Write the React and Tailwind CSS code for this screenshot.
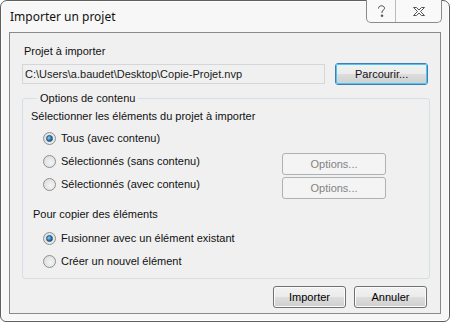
import React from 'react';

const btn =
  'flex items-center justify-center rounded-[3px] border border-[#707070] bg-[linear-gradient(180deg,#f2f2f2_0%,#ebebeb_50%,#dddddd_51%,#cfcfcf_100%)] text-[11px] text-black shadow-[inset_0_0_0_1px_#fcfcfc]';

function Radio({ checked, label }) {
  return (
    <div className="flex h-[23px] items-center gap-[5px]">
      <span className="flex h-[13px] w-[13px] items-center justify-center rounded-full border border-[#8e8f8f] bg-[radial-gradient(circle_at_60%_60%,#f4f4f4_0%,#d8d8d8_100%)]">
        {checked && (
          <span className="h-[7px] w-[7px] rounded-full border border-[#1b4c7a] bg-[radial-gradient(circle_at_35%_35%,#8ad0f2_0%,#2a7ab8_55%,#14406a_100%)]" />
        )}
      </span>
      <span>{label}</span>
    </div>
  );
}

export default function App() {
  return (
    <div className="h-[324px] w-[451px] bg-white font-['Liberation_Sans',Arial,sans-serif] text-[11px] text-[#111]">
      <div className="relative h-[322px] w-[450px] rounded-t-[7px] rounded-b-[6px] border border-[#5e5e5e] bg-[#f7f7f7] shadow-[inset_0_0_0_1px_#ffffff]">
        {/* barre de titre */}
        <div className="flex h-[31px] items-center pl-[9px] font-['Noto_Sans',sans-serif] text-[12px] text-[#111]">
          Importer un projet
        </div>
        <div className="absolute right-[7px] top-[-1px] flex h-[23px] w-[76px] rounded-b-[5px] border border-t-0 border-[#8a8a8a] bg-[#f9f9f9]">
          <div className="flex w-[29px] items-center justify-center border-r border-[#bcbcbc] text-[12px] text-[#444]">
            <svg width="9" height="12" viewBox="0 0 9 12" fill="none" stroke="#444" strokeWidth="1">
              <path d="M1.5 3.5C1.5 1.5 3 0.8 4.5 0.8S7.5 1.6 7.5 3.3C7.5 5 5 5.2 5 7.2V8M4.3 10h1.4v1.4H4.3z" />
            </svg>
          </div>
          <div className="flex flex-1 items-center justify-center">
            <svg width="14" height="11" viewBox="0 0 14 11" fill="none" stroke="#555" strokeWidth="1">
              <path d="M1.5 1.5h3l2.5 2.5 2.5-2.5h3l-4 4 4 4h-3L7 7 4.5 9.5h-3l4-4z" />
            </svg>
          </div>
        </div>

        {/* zone client */}
        <div className="mx-[8px] h-[282px] border border-[#878b8f] bg-[#f0f0f0] px-[12px] pt-[12px]">
          <div className="pl-[2px] leading-[13px]">Projet à importer</div>
          <div className="mt-[5px] flex items-center">
            <div className="flex h-[20px] w-[304px] items-center border border-[#d4d6d8] bg-[#f0f0f0] pl-[2px] text-[#1a1a1a]">
              C:\Users\a.baudet\Desktop\Copie-Projet.nvp
            </div>
            <div className="ml-[10px] h-[22px] w-[93px] rounded-[3px] border border-[#3c7fb1] p-0">
              <div className="flex h-full w-full items-center justify-center rounded-[2px] bg-[linear-gradient(180deg,#f2f2f2_0%,#ebebeb_50%,#dddddd_51%,#cfcfcf_100%)] shadow-[inset_0_0_0_1px_#48c6f7]">
                Parcourir...
              </div>
            </div>
          </div>

          <fieldset className="mt-[7px] h-[187px] w-[408px] rounded-[3px] border border-[#d5dfe5] px-[8px]">
            <legend className="ml-[6px] px-[3px] leading-[13px]">Options de contenu</legend>
            <div className="mt-[5px] leading-[13px]">Sélectionner les éléments du projet à importer</div>
            <div className="mt-[4px] flex">
              <div className="pl-[12px]">
                <Radio checked label="Tous (avec contenu)" />
                <Radio label="Sélectionnés (sans contenu)" />
                <Radio label="Sélectionnés (avec contenu)" />
              </div>
              <div className="ml-auto mr-[35px] mt-[26px] flex flex-col gap-[2px]">
                <div className="flex h-[22px] w-[104px] items-center justify-center rounded-[3px] border border-[#adb2b5] bg-[#f4f4f4] text-[#838383]">
                  Options...
                </div>
                <div className="flex h-[22px] w-[104px] items-center justify-center rounded-[3px] border border-[#adb2b5] bg-[#f4f4f4] text-[#838383]">
                  Options...
                </div>
              </div>
            </div>
            <div className="mt-[9px] pl-[2px] leading-[13px]">Pour copier des éléments</div>
            <div className="mt-[6px] pl-[12px]">
              <Radio checked label="Fusionner avec un élément existant" />
              <Radio label="Créer un nouvel élément" />
            </div>
          </fieldset>

          <div className="mt-[7px] flex justify-end gap-[8px] pr-[1px]">
            <div className={`${btn} h-[22px] w-[73px]`}>Importer</div>
            <div className={`${btn} h-[22px] w-[73px]`}>Annuler</div>
          </div>
        </div>
      </div>
    </div>
  );
}
